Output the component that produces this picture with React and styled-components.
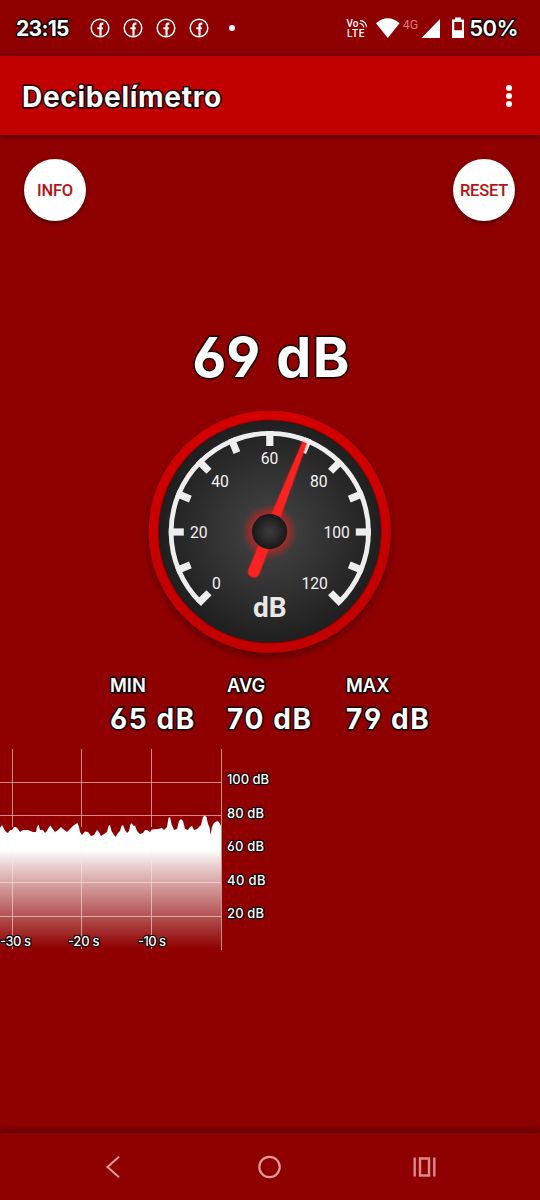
import React from "react";
import styled, { createGlobalStyle } from "styled-components";

const GlobalStyle = createGlobalStyle`
  * {
    box-sizing: border-box;
  }
  body {
    margin: 0;
    background-color: #8f0000;
  }
`;

const StyledScreen = styled.div`
  display: flex;
  flex-direction: column;
  width: 540px;
  height: 1200px;
  overflow: hidden;
  background-color: #8f0000;
  font-family: Inter, "Open Sans", sans-serif;
  /* open six and nine */
  font-feature-settings: "cv03", "cv04";
  color: white;
`;
const StyledOutlined = styled.span`
  font-size: ${(props) => props.$size}px;
  font-weight: ${(props) => props.$weight || 700};
  line-height: ${(props) => props.$line || props.$size}px;
  letter-spacing: ${(props) => props.$spacing || 0}px;
  white-space: nowrap;
  -webkit-text-stroke: ${(props) => props.$stroke || 3}px #120000;
  paint-order: stroke fill;
`;

const StyledStatusBar = styled.div`
  display: flex;
  align-items: center;
  justify-content: space-between;
  height: 56px;
  flex-shrink: 0;
  padding: 0 22px 0 16px;
`;
const StyledNotifications = styled.div`
  display: flex;
  align-items: center;
  gap: 13px;
`;
const StyledClock = styled.div`
  display: flex;
  width: 61px;
`;
const StyledDot = styled.div`
  width: 6px;
  height: 6px;
  margin-left: 7px;
  border-radius: 50%;
  background-color: white;
`;
const StyledSignals = styled.div`
  display: flex;
  align-items: center;
`;

const StyledAppBar = styled.div`
  display: flex;
  align-items: center;
  justify-content: space-between;
  height: 79px;
  flex-shrink: 0;
  padding: 3px 28px 0 22px;
  background-color: #c10000;
  box-shadow: 0 1px 6px rgba(0, 0, 0, 0.5);
`;
const StyledMenu = styled.div`
  display: flex;
  flex-direction: column;
  gap: 2.2px;
  padding-bottom: 2px;
`;
const StyledMenuDot = styled.div`
  width: 6px;
  height: 6px;
  border-radius: 50%;
  background-color: white;
`;

const StyledContent = styled.main`
  display: flex;
  flex-direction: column;
  flex: 1;
`;
const StyledButtonRow = styled.div`
  display: flex;
  justify-content: space-between;
  padding: 24px 25px 0 24px;
`;
const StyledButton = styled.button`
  width: 62px;
  height: 62px;
  padding: 0;
  border: none;
  border-radius: 50%;
  background-color: white;
  color: #b81212;
  font-family: Roboto, sans-serif;
  font-size: 16.5px;
  font-weight: 500;
  letter-spacing: -0.2px;
  box-shadow: 0 2px 5px rgba(0, 0, 0, 0.45);
`;
const StyledReading = styled.div`
  display: flex;
  justify-content: center;
  height: 60px;
  margin-top: 106px;
  padding-left: 3px;
`;
const StyledGauge = styled.svg`
  display: block;
  width: 280px;
  height: 280px;
  margin: 5px 0 0 130px;
  font-family: Roboto, sans-serif;
`;
const StyledStats = styled.div`
  display: grid;
  grid-template-columns: 117px 119px 100px;
  height: 76px;
  padding-left: 110px;
`;
const StyledStat = styled.div`
  display: flex;
  flex-direction: column;
`;
const StyledChart = styled.svg`
  display: block;
  width: 290px;
  height: 210px;
`;
const StyledChartLabel = styled.text`
  fill: white;
  stroke: #120000;
  stroke-width: 2.4px;
  stroke-linejoin: round;
  paint-order: stroke;
  font-size: 13px;
  font-weight: 500;
`;

const StyledNavBar = styled.div`
  display: flex;
  align-items: center;
  height: 67px;
  flex-shrink: 0;
  padding-left: 101px;
  gap: 131.5px;
  background-color: #8f0000;
  box-shadow: 0 -1px 7px 1px rgba(0, 0, 0, 0.5);
`;

const CENTER = 140;
const stats = [
  { label: "MIN", value: "65 dB" },
  { label: "AVG", value: "70 dB" },
  { label: "MAX", value: "79 dB" },
];
const gaugeLabels = [
  { text: "0", x: 86.3, y: 196.6 },
  { text: "20", x: 68.7, y: 145.6 },
  { text: "40", x: 90, y: 94.6 },
  { text: "60", x: 139.6, y: 71.8 },
  { text: "80", x: 188.8, y: 94.6 },
  { text: "100", x: 206.7, y: 145.6 },
  { text: "120", x: 184.7, y: 196.6 },
];
const levels = [
  { text: "100 dB", line: 34.5, y: 36, width: 42 },
  { text: "80 dB", line: 67.5, y: 69.8, width: 37 },
  { text: "60 dB", y: 103, width: 37 },
  { text: "40 dB", line: 134.5, y: 136.8, width: 38.5 },
  { text: "20 dB", line: 168.5, y: 170.2, width: 37 },
];
const times = [
  { text: "-30 s", line: 12.5, x: 0, width: 31 },
  { text: "-20 s", line: 81.5, x: 68, width: 31.5 },
  { text: "-10 s", line: 151.5, x: 138, width: 28 },
];
// x, y pairs of the recorded level, oldest first
const history = [
  0, 80, 2, 77, 4, 81, 6, 84, 8, 85, 10, 82, 12, 82, 14, 79, 16, 79, 18, 81, 20,
  84, 23, 82, 28, 82, 33, 84, 36, 84, 37, 79, 38.5, 76.5, 40, 82, 43, 82, 45,
  85, 47, 83, 49, 79, 50.5, 77.5, 52, 80, 55, 84, 58, 82, 61, 79, 63, 81, 67,
  84, 71, 80, 73, 78, 75, 76.5, 77.5, 75, 79, 79, 80, 84, 82, 87, 85, 83.5, 88,
  84, 91, 88, 94, 87, 97, 82, 99, 84, 101, 88, 104, 86, 107, 84, 108.5, 78, 110,
  77, 111.5, 83, 114, 87, 115.5, 89, 118, 85, 120, 83, 121.5, 78, 123, 77, 125,
  82, 127, 85, 129, 83, 130.5, 76, 132, 75.5, 133.5, 78, 135, 77.5, 137, 83,
  140, 86, 143, 85, 145, 82, 147, 82, 150, 84, 152, 81.5, 158, 81, 162, 80, 164,
  82, 167, 79, 168.5, 70, 170, 69, 171.5, 76, 174, 82, 177, 81, 179, 73, 181,
  71, 183, 73, 185, 81, 188, 82, 190, 79, 192, 78, 194, 82, 197, 81, 201, 77,
  203, 69, 204.5, 67.5, 206.5, 69, 208, 76, 209.5, 79, 210.5, 87, 212, 79, 214,
  75, 217, 73, 219, 74, 221, 78,
];

const FacebookIcon = () => (
  <svg width="20" height="20" viewBox="0 0 20 20" fill="none" stroke="white">
    <circle cx="10" cy="10" r="8.8" strokeWidth="1.5" />
    <path d="M13.4 5.7h-.9q-2 0-2 2.1v10" strokeWidth="2.2" />
    <path d="M7.3 10.3h5.6" strokeWidth="1.9" />
  </svg>
);

const StatusBar = () => {
  return (
    <StyledStatusBar>
      <StyledNotifications>
        <StyledClock>
          <StyledOutlined $size={21} $spacing={-0.7}>
            23:15
          </StyledOutlined>
        </StyledClock>
        {[0, 1, 2, 3].map((id) => (
          <FacebookIcon key={id} />
        ))}
        <StyledDot />
      </StyledNotifications>
      <StyledSignals>
        <svg width="124" height="28" viewBox="345 14 124 28" fill="white">
          <g fontFamily="Roboto" fontSize="10" fontWeight="500">
            <text x="346.5" y="27.3" textLength="12">
              Vo
            </text>
            <text x="347" y="37.3" textLength="17.5">
              LTE
            </text>
          </g>
          <g fill="none" stroke="white" strokeWidth="1.2">
            <path d="M360 20.6q6 .3 6.6 6.6M359.6 23.4q3.6.4 4 4" />
          </g>
          <path d="M376 23.3q11.8-10 23.6 0L387.8 38Z" />
          <text
            x="402.7"
            y="29.3"
            fill="#d97c7c"
            fontFamily="Roboto"
            fontSize="12.5"
          >
            4G
          </text>
          <path d="M440 19v19h-18.5Z" />
          <path
            fillRule="evenodd"
            d="M455 17.5h6v2h3v18.5h-12v-18.5h3ZM454.3 22v8.3h7.6V22Z"
          />
        </svg>
        <StyledOutlined $size={22} $weight={600} $spacing={-0.6}>
          50%
        </StyledOutlined>
      </StyledSignals>
    </StyledStatusBar>
  );
};

const Gauge = ({ value }) => {
  const ticks = Array.from({ length: 13 }, (_, i) => -135 + i * 22.5);
  return (
    <StyledGauge viewBox="0 0 280 280">
      <defs>
        <radialGradient id="face">
          <stop offset="0" stopColor="#454545" />
          <stop offset="0.5" stopColor="#333333" />
          <stop offset="1" stopColor="#1f1f1f" />
        </radialGradient>
        <radialGradient id="hub">
          <stop offset="0" stopColor="#3d3d3d" />
          <stop offset="1" stopColor="#181818" />
        </radialGradient>
        <radialGradient id="glow">
          <stop offset="0.6" stopColor="#ff1818" stopOpacity="0.55" />
          <stop offset="1" stopColor="#ff1818" stopOpacity="0" />
        </radialGradient>
        <linearGradient id="ring" x2="0" y2="1">
          <stop offset="0" stopColor="#d40000" />
          <stop offset="0.5" stopColor="#c80000" />
          <stop offset="1" stopColor="#c00000" />
        </linearGradient>
        <filter id="shadow" x="-20%" y="-20%" width="140%" height="140%">
          <feDropShadow dx="0" dy="4" stdDeviation="4" floodOpacity="0.4" />
        </filter>
        <filter id="needleGlow" x="-100%" y="-20%" width="300%" height="140%">
          <feDropShadow
            dx="0"
            dy="0"
            stdDeviation="1.6"
            floodColor="#ff1010"
            floodOpacity="0.4"
          />
        </filter>
      </defs>
      <circle
        cx={CENTER - 0.3}
        cy={CENTER - 0.2}
        r="121"
        fill="url(#ring)"
        filter="url(#shadow)"
      />
      <circle cx={CENTER - 0.2} cy={CENTER - 0.4} r="112" fill="#8d0000" />
      <circle cx={CENTER - 0.2} cy={CENTER - 0.4} r="111" fill="url(#face)" />
      <g transform={`translate(${CENTER - 0.2} ${CENTER})`}>
        <path
          d="M-69.8 69.8A98.7 98.7 0 1 1 69.8 69.8"
          fill="none"
          stroke="#eeeeee"
          strokeWidth="4.8"
        />
        {ticks.map((angle) => (
          <rect
            key={angle}
            x="-3.6"
            y="-101"
            width="7.2"
            height="15"
            fill="#eeeeee"
            transform={`rotate(${angle})`}
          />
        ))}
      </g>
      <g fill="#f4f4f4" textAnchor="middle" fontSize="15.7">
        {gaugeLabels.map((label) => (
          <text key={label.text} x={label.x} y={label.y}>
            {label.text}
          </text>
        ))}
        <text x="139.8" y="225.2" fontSize="28" fontWeight="700" fill="#e8e8e8">
          dB
        </text>
      </g>
      <circle cx="139.6" cy="139.8" r="28" fill="url(#glow)" />
      <g
        transform={`translate(139.6 139.8) rotate(${(value - 60) * 2.25 + 1.2})`}
        filter="url(#needleGlow)"
      >
        <path
          d="M-2.4-96h4.8L5-10 5.8 43q0 5.5-5.8 5.5T-5.8 43l.8-53Z"
          fill="#fb2020"
        />
      </g>
      <circle cx="139.6" cy="139.6" r="17.6" fill="url(#hub)" />
    </StyledGauge>
  );
};

const Chart = () => {
  return (
    <StyledChart viewBox="0 0 290 210">
      <defs>
        <linearGradient
          id="level"
          gradientUnits="userSpaceOnUse"
          x1="0"
          y1="100"
          x2="0"
          y2="201"
        >
          <stop offset="0.02" stopColor="white" />
          <stop offset="0.15" stopColor="white" stopOpacity="0.84" />
          <stop offset="1" stopColor="white" stopOpacity="0" />
        </linearGradient>
      </defs>
      <polygon points={`0,201 ${history.join(" ")} 221,201`} fill="url(#level)" />
      <g stroke="#ffe4e4" strokeOpacity="0.6">
        {levels
          .filter((level) => level.line)
          .map((level) => (
            <path key={level.text} d={`M0 ${level.line}H221`} />
          ))}
        {times.map((time) => (
          <path key={time.text} d={`M${time.line} 1V79M${time.line} 105V201`} />
        ))}
        <path d="M221.5 1V202" />
      </g>
      {levels.map((level) => (
        <StyledChartLabel
          key={level.text}
          x="227"
          y={level.y}
          textLength={level.width}
        >
          {level.text}
        </StyledChartLabel>
      ))}
      {times.map((time) => (
        <StyledChartLabel
          key={time.text}
          x={time.x}
          y="198.3"
          textLength={time.width}
        >
          {time.text}
        </StyledChartLabel>
      ))}
    </StyledChart>
  );
};

const NavBar = () => {
  return (
    <StyledNavBar>
      <svg width="24" height="24" fill="none" stroke="#e39a9a" strokeWidth="2">
        <path d="M18 1.7 6.5 12 18 22.3" />
      </svg>
      <svg width="24" height="24" fill="none" stroke="#e39a9a" strokeWidth="2.2">
        <circle cx="12.5" cy="12" r="10.2" />
      </svg>
      <svg width="24" height="24" fill="none" stroke="#d98a8a" strokeWidth="2.4">
        <path d="M2.7 2.5v19M22.3 2.5v19M8 3.5h9v17H8Z" />
      </svg>
    </StyledNavBar>
  );
};

const App = () => {
  return (
    <>
      <GlobalStyle />
      <StyledScreen>
        <StatusBar />
        <StyledAppBar>
          <StyledOutlined $size={28} $weight={700} $spacing={0.7}>
            Decibelímetro
          </StyledOutlined>
          <StyledMenu>
            <StyledMenuDot />
            <StyledMenuDot />
            <StyledMenuDot />
          </StyledMenu>
        </StyledAppBar>
        <StyledContent>
          <StyledButtonRow>
            <StyledButton>INFO</StyledButton>
            <StyledButton>RESET</StyledButton>
          </StyledButtonRow>
          <StyledReading>
            <StyledOutlined $size={55.5} $line={60} $spacing={1.4}>
              69 dB
            </StyledOutlined>
          </StyledReading>
          <Gauge value={69} />
          <StyledStats>
            {stats.map((stat) => (
              <StyledStat key={stat.label}>
                <StyledOutlined $size={18.3} $line={27} $weight={600}>
                  {stat.label}
                </StyledOutlined>
                <StyledOutlined $size={28} $line={41} $spacing={1.6}>
                  {stat.value}
                </StyledOutlined>
              </StyledStat>
            ))}
          </StyledStats>
          <Chart />
        </StyledContent>
        <NavBar />
      </StyledScreen>
    </>
  );
};

export default App;
